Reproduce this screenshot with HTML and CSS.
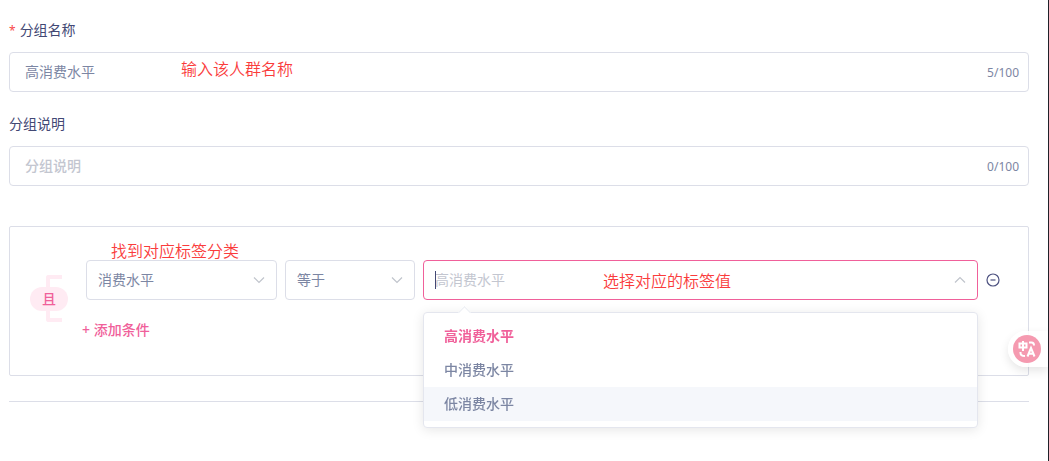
FILE: index.html
```html
<!DOCTYPE html>
<html lang="zh-CN">

<head>
    <meta charset="UTF-8">
    <meta name="viewport" content="width=device-width, initial-scale=1.0">
    <title>分组</title>
    <link rel="stylesheet" href="styles.css">
</head>

<body>
    <form class="page">
        <!-- 分组名称 -->
        <div class="form-item">
            <label class="required" for="groupName">分组名称</label>
            <div class="input-box">
                <input type="text" id="groupName" value="高消费水平" maxlength="100">
                <span class="count">5/100</span>
            </div>
            <span class="note note-name">输入该人群名称</span>
        </div>

        <!-- 分组说明 -->
        <div class="form-item">
            <label for="groupDesc">分组说明</label>
            <div class="input-box">
                <input type="text" id="groupDesc" placeholder="分组说明" maxlength="100">
                <span class="count">0/100</span>
            </div>
        </div>

        <!-- 条件设置 -->
        <div class="rules">
            <div class="relation">
                <span class="relation-text">且</span>
            </div>
            <div class="conditions">
                <div class="condition">
                    <div class="select-box select-tag">
                        <select aria-label="标签分类">
                            <option>消费水平</option>
                        </select>
                        <svg class="arrow" viewBox="0 0 12 12"><path d="M1 3.5l5 5 5-5" /></svg>
                        <span class="note note-tag">找到对应标签分类</span>
                    </div>
                    <div class="select-box select-operator">
                        <select aria-label="关系">
                            <option>等于</option>
                        </select>
                        <svg class="arrow" viewBox="0 0 12 12"><path d="M1 3.5l5 5 5-5" /></svg>
                    </div>
                    <div class="select-box select-value">
                        <input type="text" role="combobox" aria-label="标签值" aria-expanded="true" aria-controls="valueList" placeholder="高消费水平">
                        <span class="cursor"></span>
                        <svg class="arrow" viewBox="0 0 12 12"><path d="M1 8.5l5-5 5 5" /></svg>
                        <span class="note note-value">选择对应的标签值</span>
                        <!-- 下拉菜单 -->
                        <div class="dropdown">
                            <ul id="valueList" role="listbox">
                                <li class="selected" role="option" aria-selected="true">高消费水平</li>
                                <li role="option" aria-selected="false">中消费水平</li>
                                <li class="hover" role="option" aria-selected="false">低消费水平</li>
                            </ul>
                        </div>
                    </div>
                    <button class="remove" type="button" aria-label="删除条件">
                        <svg viewBox="0 0 14 14"><circle cx="7" cy="7" r="6" /><path d="M4.500 7h5" /></svg>
                    </button>
                </div>
                <button class="add" type="button">+ 添加条件</button>
            </div>
        </div>

        <hr class="divider">
    </form>

    <!-- 翻译悬浮按钮 -->
    <button class="translate" type="button" aria-label="翻译">
        <svg viewBox="0 0 28 28">
            <circle class="translate-bg" cx="14" cy="14" r="14" />
            <path d="M6.500 8.500h7v4h-7zM10 6v10" />
            <path d="M16 7.500h2.500q2.500 0 2.500 3M7.500 17v1q0 3 4.500 3" />
            <path d="M14.500 21.500l3.500-8.500 3.500 8.500M15.800 18.800h4.500" />
        </svg>
    </button>
</body>

</html>
```
FILE: styles.css
```css
*,
*::before {
    margin: 0;
    padding: 0;
    box-sizing: border-box;
}

body {
    font-family: "Noto Sans", "Noto Sans CJK SC", sans-serif;
    font-size: 14px;
    color: #424874;
    background: #fff;
}

input,
select,
button {
    font-family: inherit;
    font-size: 14px;
    color: #7c86a3;
    background: none;
    border: none;
    outline: none;
}

button {
    cursor: pointer;
}

ul {
    list-style: none;
}

.page {
    min-height: 100vh;
    padding: 10px 19px 0 9px;
    border-right: 1px solid #1f2029;
}

.form-item {
    position: relative;
    margin-bottom: 12px;
}

.form-item label {
    display: block;
    height: 42px;
    line-height: 40px;
}

.form-item .required::before {
    content: "*";
    margin-right: 4px;
    font-size: 12px;
    color: #f8484a;
}

.input-box {
    display: flex;
    align-items: center;
    height: 40px;
    padding: 0 9px 0 15px;
    border: 1px solid #dcdee8;
    border-radius: 4px;
}

.input-box input {
    flex: 1;
    min-width: 0;
    height: 38px;
    padding-bottom: 2px;
}

.input-box .count {
    font-size: 12px;
    color: #7c86a3;
}

input::placeholder {
    color: #c3c6d0;
    opacity: 1;
}

#groupDesc::placeholder {
    font-weight: 500;
}

/* 红色批注文字 */
.note {
    position: absolute;
    font-size: 16px;
    line-height: 24px;
    font-weight: 350;
    color: #fa3c3c;
    white-space: nowrap;
    pointer-events: none;
}

.note-name {
    left: 172px;
    top: 47px;
}

.note-tag {
    left: 24px;
    top: -22px;
}

.note-value {
    left: 179px;
    top: 8px;
}

/* 条件 */
.rules {
    display: flex;
    gap: 14px;
    min-height: 150px;
    margin-top: 40px;
    padding: 33px 28px 24px 20px;
    border: 1px solid #dcdee8;
    border-radius: 2px;
}

.relation {
    position: relative;
    display: flex;
    align-items: center;
    width: 38px;
    height: 47px;
    margin-top: 15px;
}

.relation::before {
    content: "";
    position: absolute;
    left: 16px;
    top: 0;
    width: 16px;
    height: 47px;
    border: 4px solid #ffebf3;
    border-right: none;
    border-radius: 3px 0 0 3px;
}

.relation-text {
    position: relative;
    width: 38px;
    line-height: 24px;
    font-weight: 500;
    text-align: center;
    color: #f0609a;
    background: #ffebf3;
    border-radius: 12px;
}

.conditions {
    flex: 1;
    min-width: 0;
}

.condition {
    display: flex;
    align-items: center;
    gap: 8px;
    padding-left: 4px;
}

.select-box {
    position: relative;
    height: 40px;
    border: 1px solid #dcdee8;
    border-radius: 4px;
}

.select-box select,
.select-box input {
    width: 100%;
    height: 38px;
    padding: 0 30px 2px 11px;
    appearance: none;
}

.select-tag {
    width: 191px;
}

.select-operator {
    width: 130px;
}

.select-value {
    flex: 1;
    border-color: #f0609a;
}

.arrow {
    position: absolute;
    right: 11px;
    top: 13px;
    width: 12px;
    height: 12px;
    fill: none;
    stroke: #c0c4cc;
    stroke-width: 1.2;
    pointer-events: none;
}

.cursor {
    position: absolute;
    left: 11px;
    top: 10px;
    width: 1px;
    height: 18px;
    background: #424874;
}

.dropdown {
    position: absolute;
    left: -1px;
    right: -1px;
    top: 51px;
    z-index: 10;
    padding: 6px 0;
    background: #fff;
    border: 1px solid #e4e6ee;
    border-radius: 4px;
    box-shadow: 0 2px 12px rgba(0, 0, 0, 0.1);
}

.dropdown::before {
    content: "";
    position: absolute;
    left: 36px;
    top: -5px;
    width: 9px;
    height: 9px;
    background: #fff;
    border: 1px solid #ebedf3;
    border-right: none;
    border-bottom: none;
    transform: rotate(45deg);
}

.dropdown li {
    height: 34px;
    padding: 0 20px;
    line-height: 33px;
    font-weight: 500;
    color: #7c86a3;
    cursor: pointer;
}

.dropdown .hover {
    background: #f5f7fb;
}

.dropdown .selected {
    font-weight: 700;
    color: #f0609a;
}

.remove {
    width: 14px;
    height: 14px;
}

.remove svg {
    display: block;
    fill: none;
    stroke: #4d5280;
    stroke-width: 1.2;
}

.add {
    display: block;
    height: 20px;
    margin-top: 20px;
    line-height: 20px;
    font-weight: 500;
    color: #f0609a;
}

.divider {
    margin-top: 25px;
    border: none;
    border-top: 1px solid #dcdee8;
}

.translate {
    position: fixed;
    right: 1px;
    top: 331px;
    width: 40px;
    height: 36px;
    padding: 4px 7px 4px 5px;
    background: rgba(255, 255, 255, 0.85);
    border-radius: 18px 0 0 18px;
    box-shadow: 0 4px 10px rgba(0, 0, 0, 0.1);
}

.translate svg {
    display: block;
    width: 28px;
    height: 28px;
    fill: none;
    stroke: #fff;
    stroke-width: 2;
}

.translate .translate-bg {
    fill: #f59ab0;
    stroke: none;
}
```
